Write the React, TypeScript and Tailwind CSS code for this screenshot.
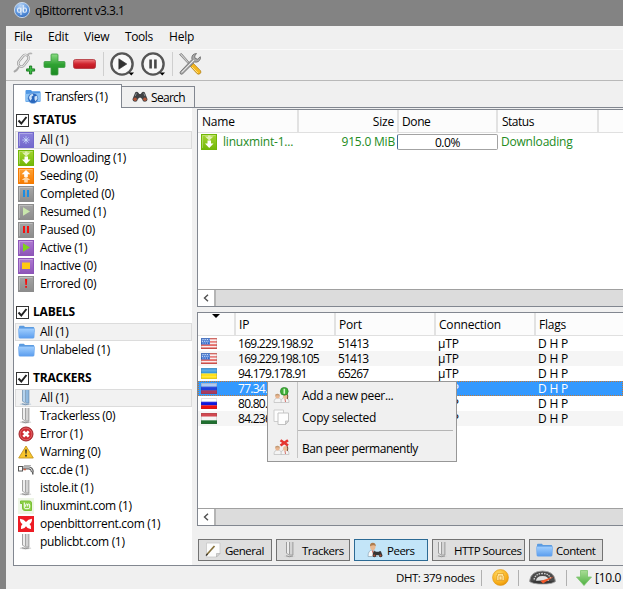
import React from "react";

type IconProps = { className?: string };

/* ---------- Toolbar icons ---------- */

function AppLogo() {
  return (
    <svg width="16" height="16" viewBox="0 0 16 16">
      <defs>
        <radialGradient id="logo" cx="0.4" cy="0.2" r="0.9">
          <stop offset="0" stopColor="#b4d2f5" />
          <stop offset="0.6" stopColor="#5a93dc" />
          <stop offset="1" stopColor="#2c62b4" />
        </radialGradient>
      </defs>
      <circle cx="8" cy="8" r="7.6" fill="url(#logo)" stroke="#dbe8f8" strokeWidth="0.8" />
      <g fill="none" stroke="#e8f1fc" strokeWidth="1.1">
        <rect x="3.6" y="6" width="3.2" height="4.2" rx="1.4" />
        <path d="M7 5.5v7.5M9.2 3v7.5" />
        <rect x="9.2" y="6" width="3.2" height="4.2" rx="1.4" />
      </g>
    </svg>
  );
}

function LinkIcon() {
  return (
    <svg width="24" height="26" viewBox="0 0 24 26">
      <g fill="none" strokeLinecap="round">
        <g transform="rotate(-52 10 10)">
          <rect x="4" y="7" width="13" height="6.4" rx="3.2" stroke="#8f8f8f" strokeWidth="2.4" />
          <rect x="4" y="7" width="13" height="6.4" rx="3.2" stroke="#e4e4e4" strokeWidth="1.2" />
        </g>
        <path d="M5.5 16.500q-1.500 3-4 4" stroke="#a8a8a8" strokeWidth="1.900" />
        <path d="M14.500 4q1.500-2 4-1.500" stroke="#b4b4b4" strokeWidth="1.600" />
      </g>
      <path d="M16.500 15h2.200v2.900h2.900v2.200h-2.900V23h-2.200v-2.900h-2.900v-2.200h2.900z" fill="#3dbb45" stroke="#16761d" strokeWidth="0.9" />
    </svg>
  );
}

function PlusIcon() {
  return (
    <svg width="23" height="23" viewBox="0 0 23 23">
      <defs>
        <linearGradient id="plus" x2="0" y2="1">
          <stop offset="0" stopColor="#8bdc84" />
          <stop offset="0.5" stopColor="#2fa232" />
          <stop offset="1" stopColor="#1b8a22" />
        </linearGradient>
      </defs>
      <path
        d="M9 1h5q1 0 1 1v6.500h6q1 0 1 1v4q0 1-1 1h-6V21q0 1-1 1H9q-1 0-1-1v-6.500H2q-1 0-1-1v-4q0-1 1-1h6V2q0-1 1-1z"
        fill="url(#plus)"
        stroke="#3c9a42"
        strokeWidth="0.8"
      />
    </svg>
  );
}

function MinusIcon() {
  return (
    <svg width="23" height="10" viewBox="0 0 23 10">
      <defs>
        <linearGradient id="minus" x2="0" y2="1">
          <stop offset="0" stopColor="#ee7a7e" />
          <stop offset="0.5" stopColor="#d0232d" />
          <stop offset="1" stopColor="#ba1620" />
        </linearGradient>
      </defs>
      <rect x="0.5" y="0.5" width="22" height="9" rx="2" fill="url(#minus)" stroke="#b0323a" strokeWidth="0.8" />
    </svg>
  );
}

function RoundButton({ kind }: { kind: "play" | "pause" }) {
  return (
    <svg width="25" height="25" viewBox="0 0 25 25">
      <circle cx="12" cy="12" r="10.6" fill="#f8f8f8" stroke="#555" strokeWidth="2.400" />
      {kind === "play" ? (
        <path d="M8.800 6.800L16.800 12l-8 5.200z" fill="#303030" stroke="#303030" strokeWidth="0.6" />
      ) : (
        <path d="M8.300 7.500h2.600v9H8.300zM13.100 7.500h2.600v9h-2.600z" fill="#484848" />
      )}
      <path d="M18.500 20.500h5.500l-2.700 3z" fill="#000" />
    </svg>
  );
}

function ToolsIcon() {
  return (
    <svg width="24" height="24" viewBox="0 0 24 24">
      <path d="M1.500 2.500L3.500 1.500l9.500 11-1 1z" fill="#c9c9c9" stroke="#7c7c7c" strokeWidth="0.8" />
      <path d="M12.300 14.300l2.900-3 7.300 7.400q1 1.500-.3 2.800-1.500 1.300-3 .2z" fill="#f5b720" stroke="#a87510" strokeWidth="0.7" />
      <path d="M14 15l6 6" stroke="#ffe27e" strokeWidth="1" />
      <path
        d="M18.500 1.500q-4.500.3-4.700 4.300l.2 1.700L2.500 19.500q-1 1.300 0 2.400 1.200.8 2.400-.3L16.500 10q4.600.8 6-3.500l-.2-1.800-2.600 2.500-2.600-.9-.4-2.300z"
        fill="#a9a9a9"
        stroke="#666"
        strokeWidth="0.8"
      />
      <path d="M3.800 20.400L16 8" stroke="#eeeeee" strokeWidth="1" />
    </svg>
  );
}

/* ---------- Shared small icons ---------- */

function GlobeFolderIcon() {
  return (
    <svg width="16" height="16" viewBox="0 0 16 16">
      <path d="M.5 2q0-1 1-1H6l1.200 1.200H14.500q1 0 1 1V12q0 1-1 1h-13q-1 0-1-1z" fill="#4f97e4" />
      <path d="M.5 5L15.500 4v8.500h-15z" fill="#8cc2f4" />
      <circle cx="8" cy="9.300" r="5.200" fill="#2a67bd" stroke="#9cc8f0" strokeWidth="0.5" />
      <path d="M4 8q1-3 3.500-3.200l1 1.500-2 1.400L7 9.500l-1.500 2.200Q4 10.500 4 8zM9.500 7.500l2.500-.7.5 3-2 2.500-1-2z" fill="#cfe4f8" />
    </svg>
  );
}

function BinocularsIcon({ className }: IconProps) {
  return (
    <svg width="16" height="12" viewBox="0 0 17 12" className={className}>
      <path d="M3.500 1q2-1.200 3.300.5l1 1.300h1.400l1-1.300q1.300-1.700 3.300-.5l3 7.500q0 2.500-2.700 2.500-2.600 0-3-2.700L9.500 6.700h-2L6.200 8.300q-.4 2.700-3 2.700Q.5 11 .5 8.500z" fill="#3f4143" />
      <circle cx="3.300" cy="8.400" r="1.900" fill="#b05538" />
      <circle cx="13.700" cy="8.400" r="1.900" fill="#b05538" />
      <path d="M4.700 2L3.400 5M12.500 2l1.300 3" stroke="#98a0a5" strokeWidth="0.9" />
    </svg>
  );
}

function FolderIcon({ className }: IconProps) {
  return (
    <svg width="17" height="14" viewBox="0 0 17 14" className={className}>
      <defs>
        <linearGradient id="folder" x2="0" y2="1">
          <stop offset="0" stopColor="#a2d0ff" />
          <stop offset="1" stopColor="#5b9dee" />
        </linearGradient>
      </defs>
      <path d="M1 2q0-1.300 1-1.300h3.800L7 2h8.300q.9 0 .9 1v4H1z" fill="#5b9be0" />
      <path d="M.4 4.200q0-.8.800-.8h14.600q.8 0 .8.800l-.5 8q-.1 1-1 1H1.900q-1 0-1-1z" fill="url(#folder)" stroke="#6ba5ea" strokeWidth="0.5" />
    </svg>
  );
}

function ServerIcon({ blue = false }: { blue?: boolean }) {
  const edge = blue ? "#6d8fb0" : "#8c8c8c";
  return (
    <svg width="16" height="16" viewBox="0 0 16 16">
      <ellipse cx="7.500" cy="14.200" rx="5.800" ry="1.300" fill={blue ? "#c9d4de" : "#d6d6d6"} />
      <path d="M4 13.800q3 1.700 7 .2" fill="none" stroke={edge} strokeWidth="0.9" />
      <rect x="5" width="2" height="12" fill={blue ? "#b5d3ee" : "#ededed"} />
      <rect x="8" width="3" height="13" fill={blue ? "#8fb9e0" : "#d4d4d4"} />
      <path d="M4.500 0v11.500M7.500 0v12.500M10.900 0v13" stroke={edge} strokeWidth="0.8" />
      <path d="M5 11.500l2.500 1.500h3.200" fill="none" stroke={edge} strokeWidth="0.7" />
    </svg>
  );
}

type StateKind = "all" | "down" | "up" | "done" | "resumed" | "paused" | "active" | "inactive" | "error";

const stateFill: Record<StateKind, [string, string]> = {
  all: ["#8d83dc", "#7268cc"],
  down: ["#a5d632", "#72b708"],
  up: ["#ffa438", "#f57a00"],
  done: ["#a9a9a9", "#8c8c8c"],
  resumed: ["#a5a5a5", "#8c8c8c"],
  paused: ["#a5a5a5", "#8c8c8c"],
  active: ["#b07bd2", "#8d55b8"],
  inactive: ["#b07bd2", "#8d55b8"],
  error: ["#a5a5a5", "#8c8c8c"],
};

function StateIcon({ kind }: { kind: StateKind }) {
  const [light, dark] = stateFill[kind];
  return (
    <svg width="16" height="16" viewBox="0 0 16 16">
      <defs>
        <linearGradient id={`state-${kind}`} x2="0" y2="1">
          <stop offset="0" stopColor={light} />
          <stop offset="1" stopColor={dark} />
        </linearGradient>
      </defs>
      <rect x="0.500" y="0.500" width="15" height="15" fill={`url(#state-${kind})`} stroke={dark} />
      <path d="M1.500 14V1.500H14.500" fill="none" stroke="#fff" strokeOpacity="0.3" />
      {kind === "all" && (
        <g stroke="#c5d6fb" strokeWidth="0.8">
          <path d="M8 4.200v7.600M4.200 8h7.600M5.400 5.400l5.200 5.200M10.600 5.400l-5.200 5.200" />
          <circle cx="8" cy="8" r="0.8" fill="#fff" />
        </g>
      )}
      {kind === "down" && (
        <>
          <path d="M4 2.500h3v-1h2.500v1h3L8.200 6.500z" fill="#dff0b2" />
          <path d="M6.500 6.500h3.500v3h2.500l-4.300 4.500L4 9.500h2.500z" fill="#fff" />
        </>
      )}
      {kind === "up" && (
        <>
          <path d="M8 2l4.300 4.300H9.800V9H6.200V6.300H3.700z" fill="#fff" />
          <path d="M8 8.500l4.300 3.500H9.800v2.500H6.200V12H3.700z" fill="#ffd4a2" />
        </>
      )}
      {kind === "done" && <path d="M5 4h2v7H5zM9 4h2v7H9z" fill="#1c8de2" />}
      {kind === "paused" && <path d="M5 4h2v7H5zM9 4h2v7H9z" fill="#f50f0f" />}
      {kind === "resumed" && <path d="M5 3.300l7 4.200-7 4.200z" fill="#c9e6ac" />}
      {kind === "active" && <path d="M5 3.300l7 4.200-7 4.200z" fill="#80d41a" />}
      {kind === "inactive" && <rect x="4" y="4.500" width="8" height="6.500" fill="#ffc913" />}
      {kind === "error" && <path d="M7 3h2.200l-.4 6H7.400zM7.200 10h1.800v1.800H7.200z" fill="#f50f0f" />}
    </svg>
  );
}

function ErrorIcon() {
  return (
    <svg width="16" height="16" viewBox="0 0 16 16">
      <circle cx="8" cy="8" r="7" fill="#cf2c33" stroke="#9c2227" />
      <circle cx="8" cy="8" r="5.900" fill="none" stroke="#ea8286" strokeWidth="0.6" />
      <path d="M5.300 5.300l5.400 5.400M10.700 5.300l-5.400 5.400" stroke="#fff" strokeWidth="2.600" />
    </svg>
  );
}

function WarningIcon() {
  return (
    <svg width="16" height="14" viewBox="0 0 16 14">
      <path d="M8 1l7.300 12H.7z" fill="#f9c52b" stroke="#c39521" strokeWidth="0.9" strokeLinejoin="round" />
      <path d="M7.200 4.500h1.600l-.3 4.200h-1zM7.200 9.800h1.600v1.600H7.200z" fill="#222" />
    </svg>
  );
}

function FaucetIcon() {
  return (
    <svg width="17" height="12" viewBox="0 0 17 12">
      <rect x="0.500" y="2.500" width="4" height="4.500" fill="#fff" stroke="#555" />
      <path d="M4.500 4h6.500q3 .3 3.500 4" fill="none" stroke="#666" strokeWidth="3" />
      <path d="M5 3.800h6q3 .3 3.300 3.700" fill="none" stroke="#ddd" />
      <path d="M6 1.500h7" stroke="#aaa" strokeWidth="0.900" />
      <path d="M5.500 5.500h2.500" stroke="#cf6045" strokeWidth="1.500" />
      <path d="M14.800 8v2.500" stroke="#444" strokeWidth="1.300" />
    </svg>
  );
}

function MintIcon() {
  return (
    <svg width="16" height="16" viewBox="0 0 16 16">
      <rect width="16" height="16" fill="#eef6e6" />
      <path d="M2.500 3h9q2 0 2 2v7.500H7q-2.500 0-2.500-2.500V5.500h-2z" fill="#8cd046" stroke="#7ac036" />
      <path d="M6.300 4.500v4.700q0 1.500 1.500 1.500h2.400q1.500 0 1.500-1.500V7q0-1-1-1t-1 1v1.500M9.700 7q0-1-1-1t-1 1v1.700" fill="none" stroke="#fff" strokeWidth="1" />
    </svg>
  );
}

function ButterflyIcon() {
  return (
    <svg width="16" height="16" viewBox="0 0 16 16">
      <rect width="16" height="16" fill="#ed1c24" />
      <path d="M2 2.700q4 .3 6 3.300 2-3 6-3.300.2 3.800-2.500 5.300 2 1.500 1.500 5-3.600.2-5-2.700-1.400 2.900-5 2.700-.5-3.500 1.500-5Q1.800 6.500 2 2.700z" fill="#fff" />
    </svg>
  );
}

/* ---------- Flags ---------- */

function Flag({ code, dim = false }: { code: string; dim?: boolean }) {
  const stripes: Record<string, string[]> = {
    ua: ["#2590dc", "#2590dc", "#ffe11c", "#ffe11c"],
    ru: ["#ffffff", "#1018dc", "#f01010"],
    hu: ["#c8202a", "#f4f4f4", "#1f7030"],
    us: ["#e0524c", "#f8eded", "#e0524c", "#f8eded", "#e0524c", "#f8eded", "#e0524c"],
  };
  const list = stripes[code];
  const h = 11 / list.length;
  return (
    <svg width="16" height="11" viewBox="0 0 16 11">
      {list.map((color, i) => (
        <rect key={i} y={i * h} width="16" height={h + 0.1} fill={color} />
      ))}
      {code === "us" && (
        <>
          <rect width="9" height="6.500" fill="#2c66cc" />
          <path d="M1.500 1.500h7M1 3.300h7M1.500 5.100h7" stroke="#dbe7fa" strokeDasharray="1 1.200" />
        </>
      )}
      <rect width="16" height="4.500" fill="#fff" opacity="0.180" />
      {dim && <rect width="16" height="11" fill="#3e7ed8" opacity="0.400" />}
      <rect x="0.500" y="0.500" width="15" height="10" fill="none" stroke="#444" strokeOpacity="0.150" />
    </svg>
  );
}

/* ---------- Context menu and detail tab icons ---------- */

function PeopleIcon({ badge }: { badge: "add" | "ban" }) {
  return (
    <svg width="17" height="17" viewBox="0 0 17 17">
      <path d="M1 15.500q0-4.500 3.800-4.500t3.700 4.500z" fill="#f4f4f4" stroke="#bbb" strokeWidth="0.700" />
      <path d="M8 15.500q0-5 4-5t4 5z" fill="#f4f4f4" stroke="#bbb" strokeWidth="0.700" />
      <path d="M12 12l.5 3" stroke="#d0605a" strokeWidth="0.900" />
      <circle cx="4.500" cy="9.300" r="2.200" fill="#e9b58f" />
      <path d="M2 8.800Q2 6.500 4.700 6.700 7 7 7 8.800 4.500 7.500 2 8.800z" fill="#c09a75" />
      <ellipse cx="12.200" cy="9.500" rx="2.200" ry="2.600" fill="#edbd98" />
      <path d="M14 7q1.500 2 .3 5" fill="none" stroke="#7d563a" strokeWidth="1.200" />
      {badge === "add" ? (
        <>
          <circle cx="11.300" cy="4.300" r="3.900" fill="#3fae37" stroke="#267f25" strokeWidth="0.700" />
          <path d="M11.300 1.800v5" stroke="#d8f3cf" strokeWidth="1.600" />
        </>
      ) : (
        <path d="M7.500 1.200l7.500 5.300M15 1.200L7.500 6.500" stroke="#e5352f" strokeWidth="2.600" />
      )}
    </svg>
  );
}

function CopyIcon() {
  return (
    <svg width="17" height="17" viewBox="0 0 17 17">
      <path d="M1 1h9.500v11.500H1z" fill="#fdfdfd" stroke="#cdcdcd" />
      <path d="M5 4h10.500v8l-3 3.500H5z" fill="#fdfdfd" stroke="#c3c3c3" />
      <path d="M15.500 12h-3v3.500z" fill="#ddd" stroke="#b5b5b5" strokeWidth="0.700" />
    </svg>
  );
}

function NoteIcon() {
  return (
    <svg width="16" height="16" viewBox="0 0 16 16">
      <path d="M1.500 1h13.500v10.500L11.500 15h-10z" fill="#fcfcfc" stroke="#c8c8c8" strokeWidth="0.800" />
      <path d="M15 11.500h-3.500V15z" fill="#d5d5d5" stroke="#aaa" strokeWidth="0.600" />
      <path d="M1.500 13L9.500 4" stroke="#86713c" strokeWidth="1.700" />
      <path d="M1 13.700l1.600-1.800" stroke="#333" strokeWidth="1.200" />
    </svg>
  );
}

function PeerIcon() {
  return (
    <svg width="16" height="16" viewBox="0 0 16 16">
      <path d="M1 14.500q0-6.500 4.500-6.500 4 0 5 6.500z" fill="#fafafa" stroke="#8aa5b5" strokeWidth="0.700" />
      <ellipse cx="5.800" cy="4.600" rx="2.700" ry="3.600" fill="#e9b991" />
      <path d="M3 4.300Q2.800.7 5.800.7t3 3.600Q7 2 3 4.300z" fill="#ad7c4e" />
      <path d="M5.500 8.500l1 3.500" stroke="#c95a4d" strokeWidth="1.200" />
      <path d="M6.500 9.500q1-1.300 2.300.3h3q1.300-1.600 2.200-.3l1.500 4q0 1.800-2 1.800-1.500 0-2-2.300h-2q-.5 2.300-2 2.300-2 0-2-1.800z" fill="#353535" />
      <circle cx="7.300" cy="13.500" r="1" fill="#b35137" />
      <circle cx="13.400" cy="13.500" r="1" fill="#b35137" />
    </svg>
  );
}

/* ---------- Status bar icons ---------- */

function PlugIcon() {
  return (
    <svg width="17" height="17" viewBox="0 0 17 17">
      <defs>
        <radialGradient id="plug" cx="0.400" cy="0.300" r="0.800">
          <stop offset="0" stopColor="#ffdc67" />
          <stop offset="0.700" stopColor="#f7ab16" />
          <stop offset="1" stopColor="#d98505" />
        </radialGradient>
      </defs>
      <circle cx="8.500" cy="8.500" r="8" fill="url(#plug)" stroke="#e09a1a" strokeWidth="0.600" />
      <path d="M5.500 4.500h6v2h.8v5h-7.600v-5h.8z" fill="#ffe59a" stroke="#e09a1a" strokeWidth="0.700" />
      <path d="M7 7h3v4H7z" fill="none" stroke="#e5a43a" strokeWidth="0.900" />
    </svg>
  );
}

function GaugeIcon() {
  return (
    <svg width="27" height="17" viewBox="0 0 27 17">
      <path d="M.5 12.500Q1.500 2 13.500 2t13 10.500q-3 2.500-13 2.500T.5 12.500z" fill="#4b4b4b" stroke="#a2a2a2" strokeWidth="0.900" />
      <path d="M5 10.500q1.500-6 8.500-6t8.500 6" fill="none" stroke="#d5d5d5" strokeWidth="1.300" strokeDasharray="1.500 1" />
      <path d="M7 12.500q0-5.500 6.500-5.500t6.500 5.500z" fill="#e2e2e2" />
      <path d="M2.500 12.500q11-2 22 0-3 2-11 2t-11-2z" fill="#383838" />
      <path d="M11.500 12L25 7.500 14 14.500z" fill="#f2582a" />
    </svg>
  );
}

function DownArrowIcon() {
  return (
    <svg width="16" height="16" viewBox="0 0 16 16">
      <defs>
        <linearGradient id="arrow" x2="0" y2="1">
          <stop offset="0" stopColor="#a9dd96" />
          <stop offset="1" stopColor="#4fb142" />
        </linearGradient>
      </defs>
      <path d="M4.500.5h7v6.500h4L8 15.500.5 7h4z" fill="url(#arrow)" stroke="#7cc46d" strokeWidth="0.800" />
    </svg>
  );
}

/* ---------- Data ---------- */

type Item = { icon: React.ReactNode; label: string };
type Group = { title: string; items: Item[]; className: string };

const groups: Group[] = [
  {
    title: "STATUS",
    className: "h-[192px]",
    items: [
      { icon: <StateIcon kind="all" />, label: "All (1)" },
      { icon: <StateIcon kind="down" />, label: "Downloading (1)" },
      { icon: <StateIcon kind="up" />, label: "Seeding (0)" },
      { icon: <StateIcon kind="done" />, label: "Completed (0)" },
      { icon: <StateIcon kind="resumed" />, label: "Resumed (1)" },
      { icon: <StateIcon kind="paused" />, label: "Paused (0)" },
      { icon: <StateIcon kind="active" />, label: "Active (1)" },
      { icon: <StateIcon kind="inactive" />, label: "Inactive (0)" },
      { icon: <StateIcon kind="error" />, label: "Errored (0)" },
    ],
  },
  {
    title: "LABELS",
    className: "h-[66px]",
    items: [
      { icon: <FolderIcon />, label: "All (1)" },
      { icon: <FolderIcon />, label: "Unlabeled (1)" },
    ],
  },
  {
    title: "TRACKERS",
    className: "h-[190px]",
    items: [
      { icon: <ServerIcon blue />, label: "All (1)" },
      { icon: <ServerIcon />, label: "Trackerless (0)" },
      { icon: <ErrorIcon />, label: "Error (1)" },
      { icon: <WarningIcon />, label: "Warning (0)" },
      { icon: <FaucetIcon />, label: "ccc.de (1)" },
      { icon: <ServerIcon />, label: "istole.it (1)" },
      { icon: <MintIcon />, label: "linuxmint.com (1)" },
      { icon: <ButterflyIcon />, label: "openbittorrent.com (1)" },
      { icon: <ServerIcon />, label: "publicbt.com (1)" },
    ],
  },
];

const peers = [
  { flag: "us", ip: "169.229.198.92", port: "51413" },
  { flag: "us", ip: "169.229.198.105", port: "51413" },
  { flag: "ua", ip: "94.179.178.91", port: "65267" },
  { flag: "ru", ip: "77.34.", port: "", selected: true },
  { flag: "ru", ip: "80.80.", port: "" },
  { flag: "hu", ip: "84.236", port: "" },
];

/* ---------- Layout pieces ---------- */

function SidebarGroup({ group }: { group: Group }) {
  return (
    <div className={`shrink-0 ${group.className}`}>
      <div className="flex h-[22px] items-center gap-[4px] pl-px font-bold">
        <span className="flex size-[13px] items-center justify-center border border-[#333] bg-white">
          <svg width="11" height="11" viewBox="0 0 11 11">
            <path d="M1.500 5.500l2.800 3L9.500 2" fill="none" stroke="#222" strokeWidth="2" />
          </svg>
        </span>
        <span className="tracking-[-0.2px]">{group.title}</span>
      </div>
      {group.items.map((item, i) => (
        <div
          key={item.label}
          className={`flex h-[18px] items-center border pl-[2px] ${
            i === 0 ? "border-[#dcdcdc] bg-[#f2f2f2]" : "border-transparent"
          }`}
        >
          <span className="flex w-[22px] shrink-0 items-center">{item.icon}</span>
          <span className="whitespace-nowrap tracking-[-0.32px]">{item.label}</span>
        </div>
      ))}
    </div>
  );
}

function ScrollBar() {
  return (
    <div className="flex h-[17px] shrink-0 border-t border-[#a0a0a0] bg-[#dcdcdc]">
      <div className="flex w-[18px] items-center justify-center border-r-2 border-[#b4b4b4] bg-white">
        <svg width="6" height="8" viewBox="0 0 6 8">
          <path d="M5 .8L1.500 4 5 7.200" fill="none" stroke="#505050" strokeWidth="1.400" />
        </svg>
      </div>
    </div>
  );
}

function DetailTab({ icon, label, className, active = false }: Item & { className: string; active?: boolean }) {
  return (
    <button
      className={`flex h-[22px] shrink-0 items-center whitespace-nowrap border text-[11.5px] tracking-[-0.5px] ${className} ${
        active ? "border-[#2c6a94] bg-[#c3e5f8]" : "border-[#737373] bg-[#dedede]"
      }`}
    >
      <span className="flex w-[20px] shrink-0">{icon}</span>
      <span className="pt-px">{label}</span>
    </button>
  );
}

function ContextMenu() {
  return (
    <div className="absolute left-[267px] top-[381px] flex h-[81px] w-[190px] border border-[#979797] bg-[#f0f0f0]">
      <div className="mb-[3px] flex w-[30px] flex-col items-center border-r border-[#c5c5c5] pt-[5px] pr-[3px]">
        <PeopleIcon badge="add" />
        <span className="mt-[5px]">
          <CopyIcon />
        </span>
        <span className="mt-[13px]">
          <PeopleIcon badge="ban" />
        </span>
      </div>
      <div className="flex flex-1 flex-col pt-[3px] pr-[3px]">
        <span className="h-[22px] pl-1 leading-[22px] tracking-[-0.32px]">Add a new peer...</span>
        <span className="h-[22px] pl-1 leading-[22px] tracking-[-0.28px]">Copy selected</span>
        <span className="mt-px border-t border-[#b5b5b5]" />
        <span className="mt-[7px] h-[22px] pl-1 leading-[22px] tracking-[-0.47px]">Ban peer permanently</span>
      </div>
    </div>
  );
}

function TransferTable() {
  return (
    <div className="flex h-[198px] flex-col border-y border-l border-[#828790] bg-white">
      <div className="flex h-[23px] shrink-0 border-b border-[#e0e0e0] bg-[#fcfcfc] leading-[24px]">
        <span className="w-[101px] border-r-2 border-[#e2e2e2] pl-1">Name</span>
        <span className="w-[100px] border-r-2 border-[#e2e2e2] pr-[3px] text-right">Size</span>
        <span className="w-[99px] border-r-2 border-[#e2e2e2] pl-[3px] tracking-[-0.4px]">Done</span>
        <span className="w-[101px] border-r-2 border-[#e2e2e2] pl-1 tracking-[-0.5px]">Status</span>
      </div>
      <div className="flex h-[17px] shrink-0 items-center text-[#228b22]">
        <span className="flex w-[25px] pl-[3px]">
          <StateIcon kind="down" />
        </span>
        <span className="w-[76px]">linuxmint-1...</span>
        <span className="w-[98px] pr-[2px] text-right">915.0 MiB</span>
        <span className="h-[16px] w-[101px] rounded-[2px] border border-[#a3a3a3] border-l-[#406a98] bg-white text-center leading-[15px] tracking-[-0.4px] text-black">
          0.0%
        </span>
        <span className="pl-[3px]">Downloading</span>
      </div>
      <div className="flex-1" />
      <ScrollBar />
    </div>
  );
}

function PeerTable() {
  return (
    <div className="mt-[5px] flex h-[214px] flex-col border-y border-l border-[#828790] bg-white">
      <div className="flex h-[23px] shrink-0 border-b border-[#e0e0e0] bg-[#fcfcfc] leading-[24px]">
        <span className="flex w-[38px] justify-center border-r-2 border-[#e2e2e2]">
          <svg width="8" height="4" viewBox="0 0 8 4" className="mt-px">
            <path d="M0 0h8L4 4z" fill="#000" />
          </svg>
        </span>
        <span className="w-[100px] border-r-2 border-[#e2e2e2] pl-[3px]">IP</span>
        <span className="w-[100px] border-r-2 border-[#e2e2e2] pl-[3px]">Port</span>
        <span className="w-[100px] border-r-2 border-[#e2e2e2] pl-[3px]">Connection</span>
        <span className="pl-[3px]">Flags</span>
      </div>
      {peers.map((peer, i) => (
        <div
          key={peer.ip}
          className={`flex h-[15px] shrink-0 items-center leading-[15px] ${
            peer.selected
              ? "bg-[#3399ff] text-white outline-1 -outline-offset-1 outline-dotted outline-[#c47a35]"
              : i % 2 === 1
                ? "bg-[#f5f5f5]"
                : ""
          }`}
        >
          <span className="flex w-[40px] pl-[3px]">
            <Flag code={peer.flag} dim={peer.selected} />
          </span>
          <span className="w-[100px] tracking-[-0.72px]">{peer.ip}</span>
          <span className="w-[100px] tracking-[-0.8px]">{peer.port}</span>
          <span className="w-[100px]">µTP</span>
          <span>D H P</span>
        </div>
      ))}
      <div className="flex-1" />
      <ScrollBar />
    </div>
  );
}

export default function App() {
  return (
    <div className="relative flex h-[589px] w-[623px] flex-col overflow-hidden bg-[#838383] pl-[6px] font-['Open_Sans','Noto_Sans',sans-serif] text-[12px] leading-[16px] tracking-[-0.2px] text-black">
      {/* Title bar */}
      <div className="flex h-[26px] shrink-0 gap-[5px] pl-2 pt-[2px]">
        <AppLogo />
        <span className="pt-px tracking-[-0.48px]">qBittorrent v3.3.1</span>
      </div>

      <div className="flex flex-1 flex-col bg-[#f0f0f0]">
        {/* Menu bar */}
        <div className="flex h-[24px] shrink-0 border-b border-[#fafafa] pl-2 leading-[22px]">
          <span className="w-[34px]">File</span>
          <span className="w-[36px]">Edit</span>
          <span className="w-[41px]">View</span>
          <span className="w-[44px] tracking-[-0.4px]">Tools</span>
          <span>Help</span>
        </div>

        {/* Toolbar */}
        <div className="flex h-[31px] shrink-0 items-center border-b border-[#b9b9b9] pb-[2px] pl-[7px]">
          <span className="w-[30px]">
            <LinkIcon />
          </span>
          <span className="w-[30px]">
            <PlusIcon />
          </span>
          <span className="w-[30px]">
            <MinusIcon />
          </span>
          <span className="mr-[6px] h-6 w-px bg-[#cfcfcf]" />
          <span className="w-[31px]">
            <RoundButton kind="play" />
          </span>
          <span className="w-[31px]">
            <RoundButton kind="pause" />
          </span>
          <span className="mr-[5px] h-6 w-px bg-[#cfcfcf]" />
          <ToolsIcon />
        </div>

        {/* Main tabs */}
        <div className="flex h-[27px] shrink-0 pl-[7px] pt-[3px]">
          <div className="flex w-[109px] gap-1 border-x border-t border-[#828790] bg-white pl-[11px] pt-[4px]">
            <GlobeFolderIcon />
            <span className="tracking-[-0.55px]">Transfers (1)</span>
          </div>
          <div className="flex flex-1 border-b border-[#828790] pt-[2px]">
            <div className="flex w-[73px] items-center gap-[3px] border-r border-t border-[#828790] pl-[10px]">
              <BinocularsIcon />
              <span className="pt-px tracking-[-0.7px]">Search</span>
            </div>
          </div>
        </div>

        {/* Pane */}
        <div className="ml-[7px] flex h-[458px] shrink-0 border-b border-l border-[#828790]">
          <div className="flex w-[178px] shrink-0 flex-col bg-white pl-px pt-[1px]">
            {groups.map((group) => (
              <SidebarGroup key={group.title} group={group} />
            ))}
          </div>
          <div className="ml-[5px] flex min-w-0 flex-1 flex-col pt-px">
            <TransferTable />
            <PeerTable />
            <div className="flex gap-[4px] pt-[13px] pl-px">
              <DetailTab icon={<NoteIcon />} label="General" className="w-[74px] pl-[6px]" />
              <DetailTab icon={<ServerIcon />} label="Trackers" className="w-[74px] pl-[5px]" />
              <DetailTab icon={<PeerIcon />} label="Peers" className="w-[74px] pl-[12px]" active />
              <DetailTab icon={<ServerIcon />} label="HTTP Sources" className="w-[93px] pl-[1px]" />
              <DetailTab icon={<FolderIcon />} label="Content" className="w-[74px] pl-[6px]" />
            </div>
          </div>
        </div>

        {/* Status bar */}
        <div className="flex flex-1 items-center whitespace-nowrap pl-[390px]">
          <span className="w-[85px] shrink-0 pt-px text-[11.5px] tracking-[-0.45px]">DHT: 379 nodes</span>
          <span className="mr-[10px] h-4 w-px shrink-0 bg-[#b0b0b0]" />
          <PlugIcon />
          <span className="ml-[9px] mr-[10px] h-4 w-px shrink-0 bg-[#b0b0b0]" />
          <GaugeIcon />
          <span className="ml-[10px] mr-[9px] h-4 w-px shrink-0 bg-[#b0b0b0]" />
          <DownArrowIcon />
          <span className="ml-[3px] w-[27px] shrink-0 overflow-hidden pt-px tracking-[-0.3px]">[10.0</span>
        </div>
      </div>

      <ContextMenu />
    </div>
  );
}
